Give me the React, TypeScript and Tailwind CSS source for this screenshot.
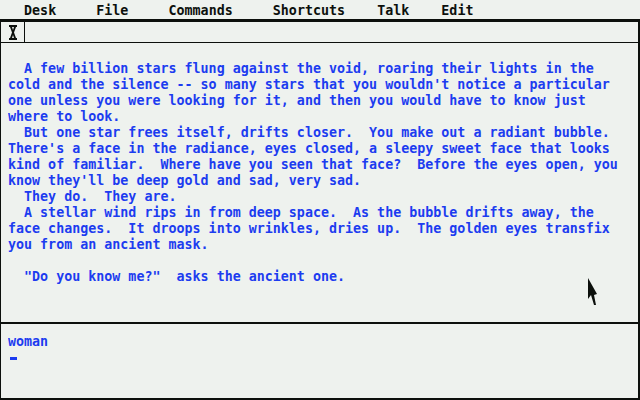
import React from 'react';

const lines = [
  '  A few billion stars flung against the void, roaring their lights in the',
  "cold and the silence -- so many stars that you wouldn't notice a particular",
  'one unless you were looking for it, and then you would have to know just',
  'where to look.',
  '  But one star frees itself, drifts closer.  You make out a radiant bubble.',
  "There's a face in the radiance, eyes closed, a sleepy sweet face that looks",
  'kind of familiar.  Where have you seen that face?  Before the eyes open, you',
  "know they'll be deep gold and sad, very sad.",
  '  They do.  They are.',
  '  A stellar wind rips in from deep space.  As the bubble drifts away, the',
  'face changes.  It droops into wrinkles, dries up.  The golden eyes transfix',
  'you from an ancient mask.',
  '',
  '  "Do you know me?"  asks the ancient one.',
];

const Line: React.FC<{ text: string }> = ({ text }) => (
  <div className="h-4 flex items-center whitespace-pre">
    <span className="block leading-[13px] scale-y-[1.12]">{text || ' '}</span>
  </div>
);

export default function App() {
  return (
    <div className="w-[640px] h-[400px] bg-[#eef2ee] text-[#0c100c] flex flex-col overflow-hidden relative font-['DejaVu_Sans_Mono',monospace] text-[13.33px] font-bold">
      {/* Menu bar */}
      <div className="h-[19px] shrink-0 pt-[1px]">
        <Line text="   Desk     File     Commands     Shortcuts    Talk    Edit" />
      </div>

      {/* Window */}
      <div className="flex-1 flex flex-col border-t-[3px] border-l border-r-2 border-b-2 border-[#0c100c]">
        {/* Title bar */}
        <div className="h-[21px] shrink-0 flex border-b border-[#0c100c]">
          <div className="w-[24px] border-r border-[#0c100c] flex items-center justify-center">
            <svg width="8" height="15" viewBox="0 0 8 15" className="ml-[1px]">
              <rect x="0" y="0" width="8" height="2" fill="#0c100c" />
              <rect x="0" y="13" width="8" height="2" fill="#0c100c" />
              <path d="M1 2 L3 2 L4 5 L5 2 L7 2 L5 7.5 L7 13 L5 13 L4 10 L3 13 L1 13 L3 7.5 Z" fill="#0c100c" />
            </svg>
          </div>
          <div className="flex-1" />
        </div>

        {/* Story text */}
        <div className="h-[281px] shrink-0 pt-[16px] pl-[7px] text-[#1c3cf0] border-b-2 border-[#0c100c]">
          {lines.map((l, i) => (
            <Line key={i} text={l} />
          ))}
        </div>

        {/* Input area */}
        <div className="flex-1 pt-[8px] pl-[7px] text-[#1c3cf0]">
          <Line text="woman" />
          <div className="h-4 relative">
            <div className="absolute left-[2px] top-[9px] w-[7px] h-[3px] bg-[#1c3cf0]" />
          </div>
        </div>
      </div>

      {/* Mouse pointer */}
      <svg width="10" height="28" viewBox="0 0 10 28" className="absolute left-[588px] top-[278px]">
        <path d="M0 0 L0 21 L3 17 L6 27 L8 27 L6 17 L9 16 Z" fill="#0c100c" />
      </svg>
    </div>
  );
}
